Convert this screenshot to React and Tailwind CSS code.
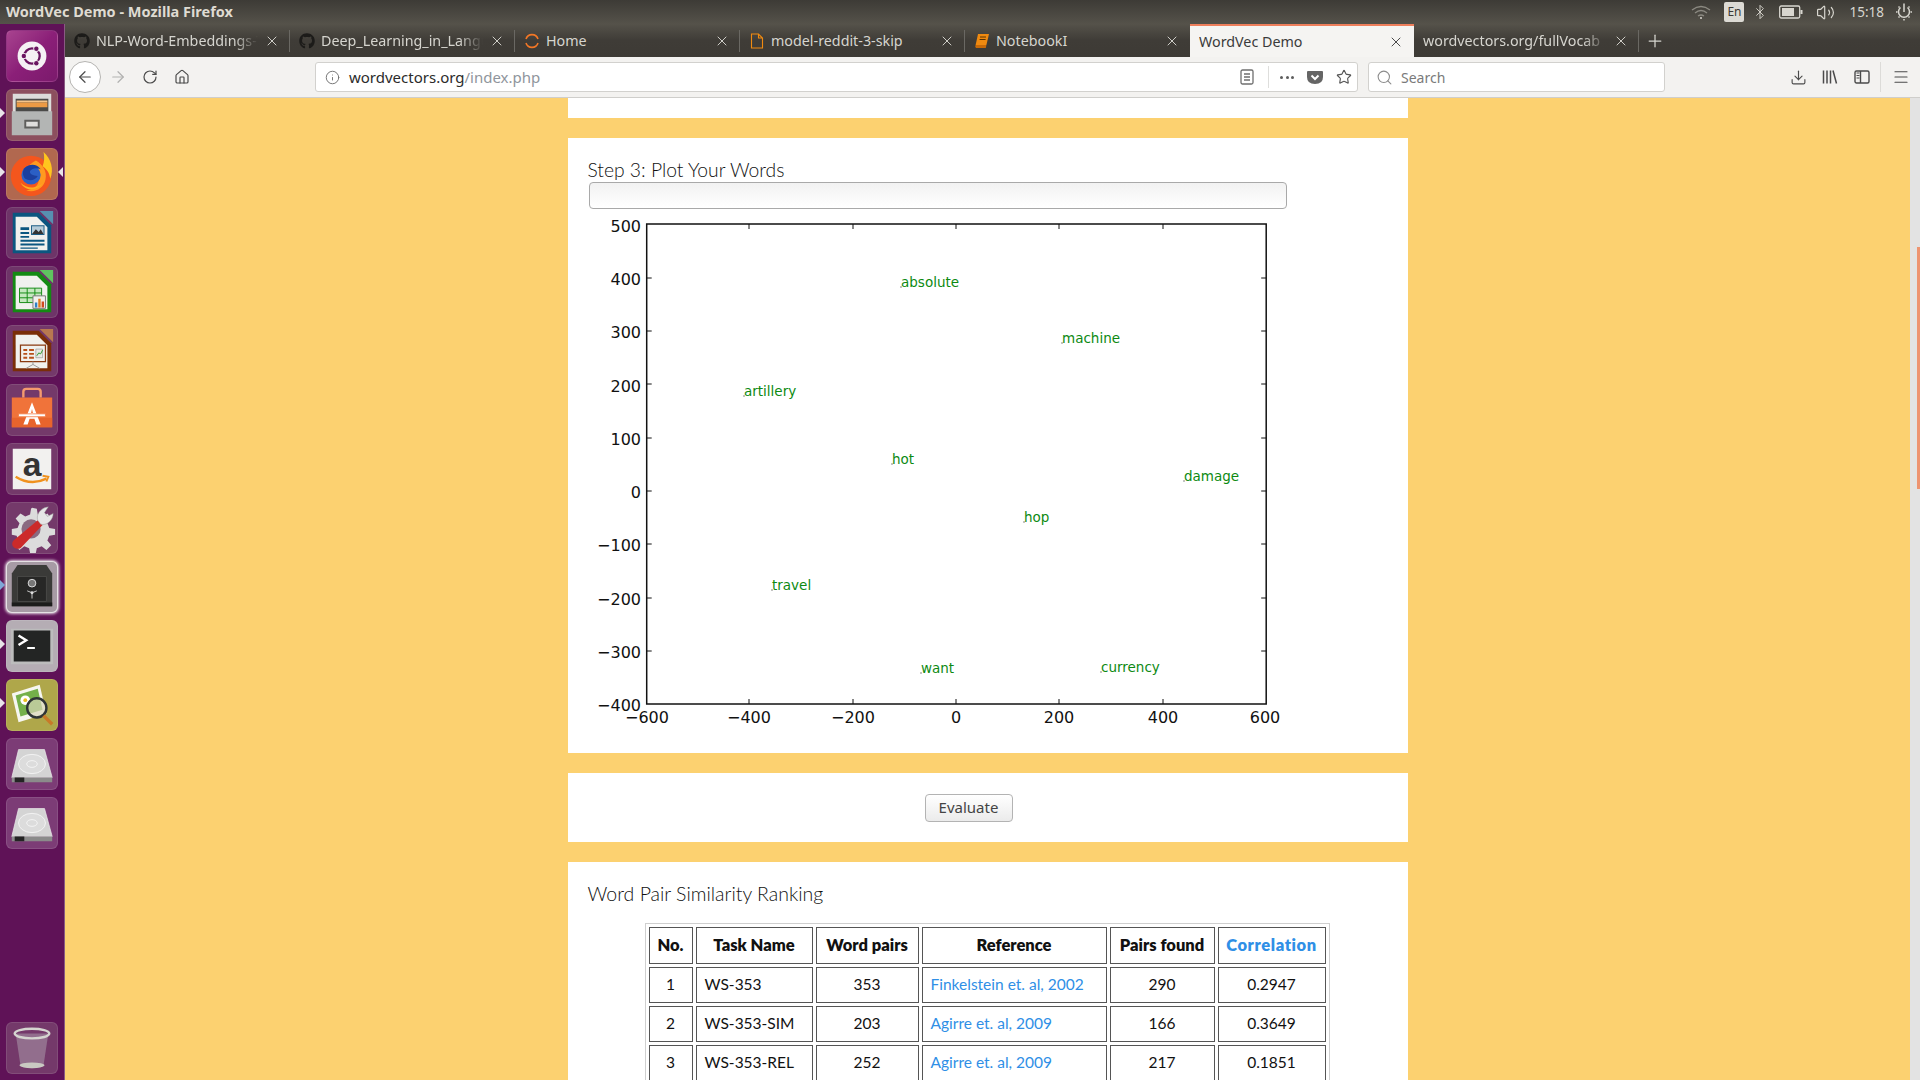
import React from 'react';
import { FaGithub } from 'react-icons/fa';
import { ArrowLeft, ArrowRight, RotateCw, Home, Info, Star, Search, Download, Menu, X, Plus, Bluetooth, Volume2 } from 'lucide-react';

const uiFont = "font-['Noto_Sans',sans-serif]";

const tabs = [
  { title: 'NLP-Word-Embeddings-Tutorial', icon: 'github', fade: true },
  { title: 'Deep_Learning_in_Langu', icon: 'github', fade: true },
  { title: 'Home', icon: 'spinner' },
  { title: 'model-reddit-3-skip', icon: 'file' },
  { title: 'NotebookI', icon: 'book' },
  { title: 'WordVec Demo', active: true },
  { title: 'wordvectors.org/fullVocab', fade: true, last: true },
];

const TabIcon = ({ type }) => {
  if (type === 'github') return <FaGithub className="w-[16px] h-[16px] text-[#1c1b19] shrink-0" />;
  if (type === 'spinner')
    return (
      <svg viewBox="0 0 16 16" className="w-[16px] h-[16px] shrink-0" fill="none" stroke="#f37726" strokeWidth="1.6">
        <path d="M2 6a6.3 6.3 0 0 1 12 0" />
        <path d="M2 10a6.3 6.3 0 0 0 12 0" />
      </svg>
    );
  if (type === 'file')
    return (
      <svg viewBox="0 0 16 16" className="w-[16px] h-[16px] shrink-0" fill="none" stroke="#f08a10" strokeWidth="1.1">
        <path d="M2.5 1h7l4 4v10h-11zM9.5 1v4h4" />
      </svg>
    );
  if (type === 'book')
    return (
      <svg viewBox="0 0 16 16" className="w-[16px] h-[16px] shrink-0">
        <path d="M4 1h11l-2.6 11H1.6z" fill="#f08a10" />
        <path d="M1.6 12h10.8l-.6 3H2q-1.4-1.4-.4-3z" fill="#c96a08" />
        <path d="M6 4h6M5.6 6.5h6" stroke="#5a3200" strokeWidth="1" />
      </svg>
    );
  return null;
};

const Tab = ({ tab }) => (
  <div
    className={
      tab.active
        ? 'w-[224px] h-full flex items-center pl-[9px] pr-[10px] bg-[#f5f4f2] border-t-[2px] border-[#ee7f5c] text-[#3b3b3b]'
        : 'w-[224px] h-full flex items-center gap-[6px] pl-[9px] pr-[9px] text-[#d6d5cf] relative'
    }
  >
    {tab.icon && <TabIcon type={tab.icon} />}
    <span
      className={
        tab.fade
          ? 'flex-1 overflow-hidden whitespace-nowrap text-[14.300px] [mask-image:linear-gradient(to_left,transparent,black_24px)]'
          : 'flex-1 overflow-hidden whitespace-nowrap text-[14.300px]'
      }
    >
      {tab.title}
    </span>
    <X className={tab.active ? 'w-[16px] h-[16px] text-[#4a4a4a] shrink-0' : 'w-[16px] h-[16px] text-[#cfcec8] shrink-0'} strokeWidth={1.5} />
  </div>
);

const Tile = ({ bg, children, pip, pipRight, pipBlue, className = '' }) => (
  <div className="relative flex justify-center shrink-0">
    {pip && <span className="absolute left-0 top-[19px] w-0 h-0 border-y-[5px] border-y-transparent border-l-[5px] border-l-[#e8e4e8]" />}
    {pipBlue && <span className="absolute left-0 top-[19px] w-0 h-0 border-y-[5px] border-y-transparent border-l-[5px] border-l-[#7fa8d8]" />}
    {pipRight && <span className="absolute right-[0px] top-[19px] w-0 h-0 border-y-[5px] border-y-transparent border-r-[5px] border-r-[#e8e4e8]" />}
    <div className={`w-[52px] h-[52px] rounded-[6px] overflow-hidden border border-white/10 ${bg} ${className}`}>
      <svg viewBox="0 0 52 52" className="w-full h-full block">{children}</svg>
    </div>
  </div>
);

const HddIcon = () => (
  <g>
    <path d="M12 11h27l8 29H5z" fill="#d4d4d4" stroke="#eeeeee" strokeWidth=".7" />
    <ellipse cx="26" cy="26" rx="14" ry="10" fill="#dcdcdc" stroke="#f4f4f4" strokeWidth="1" />
    <ellipse cx="26" cy="26" rx="5.5" ry="3.5" fill="none" stroke="#f4f4f4" strokeWidth="1" />
    <path d="M5 40h42v5H5z" fill="#8b8b8b" />
    <path d="M8 40h10v5H8z" fill="#242424" />
  </g>
);

const DocIcon = ({ border, corner, children }) => (
  <g>
    <path d="M6 5h27l13 13v29H6z" fill={border} />
    <path d="M34 3h14v14z" fill={corner} />
    <path d="M9 9h22l11 11v24H9z" fill="#f1f1ee" />
    {children}
  </g>
);

const Launcher = () => (
  <div className="w-[65px] h-full shrink-0 bg-[#5f1257] border-r border-[#8a5a83] pt-[6px] pb-[6px] pr-[1px] flex flex-col gap-[7px]">
    <Tile bg="bg-gradient-to-br from-[#a8438f] via-[#8b1f78] to-[#7b1a6c]">
      <circle cx="26" cy="26" r="15" fill="#f5f1f4" />
      <circle cx="26" cy="26" r="8" fill="none" stroke="#6a1560" strokeWidth="2.4" />
      <circle cx="17.500" cy="26" r="3.200" fill="#f5f1f4" />
      <circle cx="17.500" cy="26" r="2.300" fill="#6a1560" />
      <circle cx="30.500" cy="18.500" r="3.200" fill="#f5f1f4" />
      <circle cx="30.500" cy="18.500" r="2.300" fill="#6a1560" />
      <circle cx="30.500" cy="33.500" r="3.200" fill="#f5f1f4" />
      <circle cx="30.500" cy="33.500" r="2.300" fill="#6a1560" />
    </Tile>
    <Tile bg="bg-[#8c4f5e]" pip>
      <path d="M6 4h40v20H6z" fill="#dcdcda" />
      <path d="M9 9h34v14H9z" fill="#4a4a48" />
      <path d="M10 11h32v2H10z" fill="#f6c48a" />
      <path d="M10 13h32v5H10z" fill="#ec9a45" />
      <path d="M5 22h42v25H5z" fill="#b3b5b4" />
      <path d="M18 31h16v9H18z" fill="#5e5e5c" />
      <path d="M20 33h12v5H20z" fill="#dededc" />
    </Tile>
    <Tile bg="bg-[#b1684f]" pip pipRight>
      <circle cx="25" cy="28" r="21" fill="#f4561d" />
      <path d="M38 3c8 7 11 18 7 28-1-7-4-10-8-13 2-5 2-10 1-15z" fill="#ffc61e" />
      <path d="M30 12c7 4 12 11 10 20-2 9-11 14-20 11 8-1 13-5 13-11 0-6-6-8-12-7-1-5 3-10 9-13z" fill="#ff9a1f" />
      <circle cx="25" cy="27" r="10" fill="#2b5fc4" />
      <path d="M18 20c5-5 13-5 17 1-5-2-9-1-11 2-1 3 3 5 8 5-2 4-8 6-13 3-3-3-3-8-1-11z" fill="#1b3f9e" />
      <path d="M14 35c6 6 16 7 23 1-6 8-18 8-23-1z" fill="#ffb01f" />
    </Tile>
    <Tile bg="bg-[#6e3468]">
      <DocIcon border="#0b5680" corner="#5790b0">
        <path d="M14 20h9v3h-9zM14 25h9v2h-9zM14 29h9v2h-9z" fill="#0b5680" />
        <path d="M25 18h14v10H25z" fill="#1b5c84" />
        <path d="M26 19h12v8H26z" fill="#b5cbd8" />
        <path d="M26 27l4-5 3 3 2-3 3 5z" fill="#333" />
        <path d="M14 33h25v2H14zM14 37h25v2H14zM14 41h18v1.500H14z" fill="#0b5680" />
      </DocIcon>
    </Tile>
    <Tile bg="bg-[#6e3468]">
      <DocIcon border="#138a13" corner="#5fc45f">
        <path d="M13 22h23v15H13z" fill="#c5e8bf" stroke="#138a13" strokeWidth="1" />
        <path d="M13 27h23M13 32h23M21 22v15M29 22v15" stroke="#138a13" strokeWidth="1" />
        <path d="M27 30h13v13H27z" fill="#f1f1ee" stroke="#777" strokeWidth="1" />
        <path d="M29 37h2.500v5H29z" fill="#2f7fc4" />
        <path d="M32.500 33h2.500v9h-2.500z" fill="#e07a20" />
        <path d="M36 36h2.500v6H36z" fill="#d04a20" />
      </DocIcon>
    </Tile>
    <Tile bg="bg-[#74396a]">
      <DocIcon border="#7a2e08" corner="#b87850">
        <path d="M14 20h26v17H14z" fill="#f1f1ee" stroke="#8a3a10" strokeWidth="1.300" />
        <path d="M17 24h4v2h-4zM17 28h4v2h-4zM17 32h4v2h-4zM23 24h5v2h-5zM23 28h5v2h-5zM23 32h5v2h-5z" fill="#b8501a" />
        <path d="M30 24h7v9h-7z" fill="#e8e8e4" stroke="#888" strokeWidth=".6" />
        <path d="M31 31l2-3 2 1 2-4" stroke="#2a9a2a" fill="none" />
        <path d="M27 37v3l-7 4M27 40l7 4" stroke="#999" strokeWidth="1" fill="none" />
      </DocIcon>
    </Tile>
    <Tile bg="bg-[#74396a]">
      <path d="M5 13h42v31H5z" fill="#f0733a" />
      <path d="M5 34h42v10H5z" fill="#e8642c" />
      <path d="M17 13V7q0-3 3-3h12q3 0 3 3v6" fill="none" stroke="#f49a6e" strokeWidth="2.500" />
      <path d="M26 18l-9 23h4.500l2-6h5l2 6H35zM25 29l1-4 1 4z" fill="#fff" />
      <path d="M12 30h28v3H12z" fill="#fff" stroke="#f0733a" strokeWidth=".8" />
    </Tile>
    <Tile bg="bg-[#74396a]">
      <path d="M6 5h40v42H6z" fill="#f2f1ef" />
      <text x="26" y="33" textAnchor="middle" fontFamily="'Liberation Sans',sans-serif" fontWeight="700" fontSize="35" fill="#333">a</text>
      <path d="M9 34q16 10 32 2" fill="none" stroke="#f0921e" strokeWidth="2.500" />
      <path d="M37 33l6 1-2 5" fill="none" stroke="#f0921e" strokeWidth="2" />
    </Tile>
    <Tile bg="bg-[#74396a]">
      <path d="M26 5l5 1 1 6 5 2 5-3 4 5-4 5 2 5 6 1v6l-6 1-2 5 4 5-5 5-5-4-5 2-1 5h-6l-1-5-5-2-5 4-5-5 4-5-2-5-5-1v-6l6-1 2-5-4-5 5-5 5 3 5-2 1-6z" fill="#dcdcdc" />
      <circle cx="25" cy="27" r="10" fill="#8a6a80" />
      <path d="M6 45q-2-4 2-7l24-20 5 5-23 24q-5 2-8-2z" fill="#cc2a2a" />
      <path d="M32 18c-2-6 3-13 11-14l-4 6 3 4 6-3c0 7-7 13-13 11z" fill="#e6e6e6" stroke="#999" strokeWidth=".5" />
    </Tile>
    <Tile bg="bg-[#a79ba5]" pipBlue className="shadow-[0_0_3px_1px_#e8dfe6] border-white/70">
      <path d="M11 3h30l6 9v34H5V12z" fill="#3a3a38" />
      <path d="M5 42h42v4H5z" fill="#1c1c1b" />
      <path d="M11 15h30v26H11z" fill="#272726" stroke="#4a4a48" />
      <circle cx="26" cy="22" r="4" fill="#777" stroke="#ddd" />
      <circle cx="26" cy="32" r="1.500" fill="#ddd" />
      <path d="M26 32v6M26 32l-5-2M26 32l5-2" stroke="#ddd" strokeWidth=".9" />
    </Tile>
    <Tile bg="bg-[#b5adb4]" pip>
      <path d="M4 8h44v37H4z" fill="#bcbcbc" />
      <path d="M7 10h38v32H7z" fill="#232524" />
      <path d="M12 15l8 5-8 5" fill="none" stroke="#fff" strokeWidth="2.500" />
      <path d="M21 27h8v2h-8z" fill="#fff" />
    </Tile>
    <Tile bg="bg-[#afa74a]" pip>
      <path d="M5 14l29-9 7 30-29 9z" fill="#f6f6f0" />
      <path d="M9 16l23-7 5 22-23 7z" fill="#74b04a" />
      <circle cx="19" cy="21" r="5" fill="#fff" />
      <circle cx="19" cy="21" r="2" fill="#e8c020" />
      <circle cx="31" cy="29" r="10" fill="#d9d6b8" fillOpacity=".7" stroke="#2f3536" strokeWidth="2.500" />
      <path d="M38 37l9 9" stroke="#c87a28" strokeWidth="3.500" />
    </Tile>
    <Tile bg="bg-[#7c3c76]"><HddIcon /></Tile>
    <Tile bg="bg-[#7c3c76]"><HddIcon /></Tile>
    <div className="mt-auto">
      <Tile bg="bg-[#74396a]">
        <path d="M9 11l5 33q1 3 12 3t12-3l5-33z" fill="#9a7c96" fillOpacity=".8" />
        <ellipse cx="26" cy="11" rx="18" ry="5" fill="none" stroke="#d5d5d0" strokeWidth="2.500" />
        <ellipse cx="26" cy="44" rx="13" ry="3" fill="#c9c9c2" />
      </Tile>
    </div>
  </div>
);

const TrayIcons = () => (
  <div className={`ml-auto flex items-center h-full text-[#d8d6cf] ${uiFont}`}>
    <svg viewBox="0 0 20 16" className="w-[20px] h-[16px] mr-[13px]" fill="none" stroke="#8c8a82" strokeWidth="1.300">
      <path d="M1 6q9-7 18 0M4 9q6-5 12 0M7 12q3-2 6 0" />
      <circle cx="10" cy="14" r="1" fill="#d8d6cf" stroke="none" />
    </svg>
    <div className="w-[20px] h-[20px] rounded-[2px] bg-[#dcdad4] text-[#3c3a35] text-[12px] flex items-center justify-center">En</div>
    <Bluetooth className="w-[16px] h-[18px] ml-[8px]" strokeWidth={1.4} />
    <svg viewBox="0 0 24 14" className="w-[24px] h-[14px] ml-[11px]">
      <rect x=".7" y="1" width="20" height="12" rx="1.500" fill="none" stroke="#d8d6cf" strokeWidth="1.300" />
      <rect x="3" y="3" width="12" height="8" fill="#d8d6cf" />
      <rect x="21.500" y="5" width="2" height="4" fill="#d8d6cf" />
    </svg>
    <Volume2 className="w-[19px] h-[19px] ml-[13px]" strokeWidth={1.5} />
    <span className="text-[13.5px] ml-[14px]">15:18</span>
    <svg viewBox="0 0 18 18" className="w-[18px] h-[18px] ml-[11px] mr-[7px]" fill="none" stroke="#d8d6cf" strokeWidth="1.500">
      <path d="M5.500 4.500a5.500 5.500 0 1 0 7 0M9 2v7" />
      <path d="M9 .5V2M1 9h1.500M15.500 9H17M3.500 14.500l1-1M14.500 14.500l-1-1M9 16v1.500M3.500 3.500l1 1M14.500 3.500l-1 1" />
    </svg>
  </div>
);

const Toolbar = () => (
  <div className={`h-[41px] shrink-0 bg-[#f3f2f0] border-b border-[#cfcecb] flex items-center text-[#4b4b4b] ${uiFont}`}>
    <div className="ml-[4px] w-[32px] h-[32px] rounded-full border border-[#b5b4b1] bg-white flex items-center justify-center">
      <ArrowLeft className="w-[18px] h-[18px]" strokeWidth={1.6} />
    </div>
    <ArrowRight className="ml-[8px] w-[18px] h-[18px] text-[#b1b1b0]" strokeWidth={1.6} />
    <RotateCw className="ml-[15px] w-[16px] h-[16px]" strokeWidth={1.8} />
    <Home className="ml-[16px] w-[16px] h-[16px]" strokeWidth={1.8} />
    <div className="ml-[125px] w-[1043px] h-[30px] rounded-[3px] bg-white border border-[#d2d1ce] flex items-center">
      <Info className="ml-[9px] w-[15px] h-[15px] text-[#6f6f6f]" strokeWidth={1.5} />
      <span className="ml-[9px] text-[15px] text-[#2b2b2b]">wordvectors.org<span className="text-[#8f959c]">/index.php</span></span>
      <svg viewBox="0 0 14 16" className="ml-auto w-[14px] h-[16px]" fill="none" stroke="#6f6f6f" strokeWidth="1.300">
        <rect x="1" y="1" width="12" height="14" rx="1.500" />
        <path d="M4 5h6M4 8h6M4 11h6" />
      </svg>
      <span className="ml-[14px] w-px h-[22px] bg-[#dededc]" />
      <span className="ml-[11px] flex gap-[2.500px]">
        <i className="w-[3px] h-[3px] rounded-full bg-[#5d5d5d]" />
        <i className="w-[3px] h-[3px] rounded-full bg-[#5d5d5d]" />
        <i className="w-[3px] h-[3px] rounded-full bg-[#5d5d5d]" />
      </span>
      <svg viewBox="0 0 16 16" className="ml-[13px] w-[16px] h-[16px]">
        <path d="M1 2h14q1 0 1 1v5q0 7-8 7T0 8V3q0-1 1-1z" fill="#656565" />
        <path d="M4.500 6.500L8 10l3.500-3.500" fill="none" stroke="#fff" strokeWidth="2" />
      </svg>
      <Star className="ml-[13px] mr-[5px] w-[16px] h-[16px] text-[#555]" strokeWidth={1.7} />
    </div>
    <div className="ml-[10px] w-[297px] h-[30px] rounded-[3px] bg-white border border-[#d2d1ce] flex items-center">
      <Search className="ml-[7px] w-[17px] h-[17px] text-[#8b8b8b]" strokeWidth={1.5} />
      <span className="ml-[8px] text-[14px] text-[#7a7a7a]">Search</span>
    </div>
    <Download className="ml-[125px] w-[17px] h-[17px]" strokeWidth={1.6} />
    <svg viewBox="0 0 16 16" className="ml-[15px] w-[16px] h-[16px]" fill="none" stroke="#4b4b4b" strokeWidth="1.500">
      <path d="M1.500 1.500v13M5 1.500v13M8.500 1.500v13M11 1.500l3.500 13" />
    </svg>
    <svg viewBox="0 0 16 16" className="ml-[16px] w-[16px] h-[16px]" fill="none" stroke="#4b4b4b" strokeWidth="1.400">
      <rect x="1" y="2" width="14" height="12" rx="1.500" />
      <path d="M6.500 2v12" />
      <path d="M2.500 4h3M2.500 6.500h3M2.500 9h3" strokeWidth="1" />
    </svg>
    <span className="ml-[10px] w-px h-[30px] bg-[#dcdbd8]" />
    <Menu className="ml-[11px] w-[18px] h-[18px]" strokeWidth={1.6} />
  </div>
);

const xTicks = [
  [647, '\u2212600'], [749, '\u2212400'], [853, '\u2212200'], [956, '0'], [1059, '200'], [1163, '400'], [1265, '600'],
];
const yTicks = [
  [226, '500', 224], [279, '400', 278], [332, '300', 331], [386, '200', 384], [439, '100', 438], [492, '0', 491],
  [545, '\u2212100', 544], [599, '\u2212200', 598], [652, '\u2212300', 651], [705, '\u2212400', 704],
];
const words = [
  ['absolute', 901, 287], ['machine', 1062, 343], ['artillery', 744, 396], ['hot', 892, 464], ['damage', 1184, 481],
  ['hop', 1024, 522], ['travel', 772, 590], ['want', 921, 673], ['currency', 1101, 672],
];

// plot drawn in page coordinates, so the numbers can be read straight off the picture
const Plot = () => (
  <svg viewBox="588 212 700 530" className="w-[700px] h-[530px] block mt-[3px]" style={{ fontFamily: "'DejaVu Sans',sans-serif" }}>
    <rect x="646.700" y="224" width="619.500" height="480" fill="#fff" stroke="#111" strokeWidth="1.500" />
    {[749, 853, 956, 1059, 1163].map((x) => (
      <g key={x} stroke="#111">
        <path d={`M${x} 224v5M${x} 704v-5`} />
      </g>
    ))}
    {yTicks.slice(1, 9).map(([, , y]) => (
      <path key={y} stroke="#111" d={`M646.700 ${y}h5M1266.200 ${y}h-5`} />
    ))}
    {xTicks.map(([x, t]) => (
      <text key={t} x={x} y="722.500" textAnchor="middle" fontSize="16" fill="#111">{t}</text>
    ))}
    {yTicks.map(([y, t]) => (
      <text key={t} x="641" y={y + 6} textAnchor="end" fontSize="16" fill="#111">{t}</text>
    ))}
    {words.map(([w, x, y]) => (
      <g key={w}>
        <circle cx={x} cy={y} r=".8" fill="#777" />
        <text x={x} y={y} fontSize="13.500" fill="#0d8a12">{w}</text>
      </g>
    ))}
  </svg>
);

const rows = [
  ['1', 'WS-353', '353', 'Finkelstein et. al, 2002', '290', '0.2947'],
  ['2', 'WS-353-SIM', '203', 'Agirre et. al, 2009', '166', '0.3649'],
  ['3', 'WS-353-REL', '252', 'Agirre et. al, 2009', '217', '0.1851'],
];

const thClass = 'border border-[#555] font-extrabold text-[16.500px] text-center h-[37px] p-0';
const tdClass = 'border border-[#555] text-center h-[36px] p-0';

const ResultsTable = () => (
  <table className="ml-[77px] mt-[17px] border border-[#cfcfcf] border-separate border-spacing-[3px] text-[15.500px] text-[#111] table-fixed w-[685px]">
    <colgroup>
      <col className="w-[44px]" />
      <col className="w-[117px]" />
      <col className="w-[103px]" />
      <col className="w-[185px]" />
      <col className="w-[105px]" />
      <col className="w-[108px]" />
    </colgroup>
    <thead>
      <tr>
        <th className={thClass}>No.</th>
        <th className={thClass}>Task Name</th>
        <th className={thClass}>Word pairs</th>
        <th className={thClass}>Reference</th>
        <th className={thClass}>Pairs found</th>
        <th className={`${thClass} text-[#2f8fe6] tracking-[0.6px]`}>Correlation</th>
      </tr>
    </thead>
    <tbody>
      {rows.map((r) => (
        <tr key={r[0]}>
          <td className={tdClass}>{r[0]}</td>
          <td className={`${tdClass} text-left pl-[8px]`}>{r[1]}</td>
          <td className={tdClass}>{r[2]}</td>
          <td className={`${tdClass} text-left pl-[8px] text-[#2f8fe6]`}>{r[3]}</td>
          <td className={tdClass}>{r[4]}</td>
          <td className={tdClass}>{r[5]}</td>
        </tr>
      ))}
    </tbody>
  </table>
);

const Page = () => (
  <div className="flex-1 min-h-0 flex overflow-hidden">
    <div className="flex-1 bg-[#fcd170] overflow-hidden flex flex-col items-center gap-[20px] font-['Lato',sans-serif]">
      <div className="w-[840px] h-[20px] shrink-0 bg-white" />
      <div className="w-[840px] h-[615px] shrink-0 bg-white pl-[20px] pt-[20px]">
        <h3 className="text-[19.300px] font-light leading-[24px] text-[#111]">Step 3: Plot Your Words</h3>
        <div className="w-[698px] h-[27px] rounded-[4px] border border-[#a9a9a9] bg-gradient-to-b from-[#f2f2f2] to-white ml-[1px]" />
        <Plot />
      </div>
      <div className="w-[840px] h-[69px] shrink-0 bg-white flex items-center pl-[357px]">
        <button className={`w-[88px] h-[28px] rounded-[4px] border border-[#b3b3b3] bg-gradient-to-b from-white to-[#ebebeb] text-[15px] text-[#444] ${uiFont}`}>Evaluate</button>
      </div>
      <div className="w-[840px] shrink-0 bg-white pl-[20px] pt-[20px] pb-[40px]">
        <h3 className="text-[19.500px] font-light leading-[24px] text-[#111]">Word Pair Similarity Ranking</h3>
        <div className="-ml-[20px]">
          <ResultsTable />
        </div>
      </div>
    </div>
    <div className="w-[10px] shrink-0 bg-[#e3e3e3] pt-[149px] flex justify-end">
      <div className="w-[3px] h-[242px] bg-[#ee9470]" />
    </div>
  </div>
);

const App = () => (
  <div className={`w-screen h-screen overflow-hidden flex flex-col bg-[#3e3b36] ${uiFont}`}>
    <div className="h-[24px] shrink-0 flex items-center pl-[6px] bg-gradient-to-b from-[#3d3b36] to-[#55524a]">
      <span className="text-[14.500px] font-bold text-[#dfdbd2]">WordVec Demo - Mozilla Firefox</span>
      <TrayIcons />
    </div>
    <div className="flex-1 min-h-0 flex">
      <Launcher />
      <div className="flex-1 min-w-0 flex flex-col">
        <div className="h-[33px] shrink-0 flex items-stretch bg-gradient-to-b from-[#55524a] via-[#3f3c37] to-[#3d3a35]">
          {tabs.map((t, i) => (
            <React.Fragment key={t.title}>
              <Tab tab={t} />
              {i !== 5 && <span className={i === 4 ? 'w-px self-center h-[22px]' : 'w-px self-center h-[22px] bg-[#6a6863]'} />}
            </React.Fragment>
          ))}
          <Plus className="ml-[6px] self-center w-[20px] h-[20px] text-[#d6d5cf]" strokeWidth={1.5} />
        </div>
        <Toolbar />
        <Page />
      </div>
    </div>
  </div>
);

export default App;
